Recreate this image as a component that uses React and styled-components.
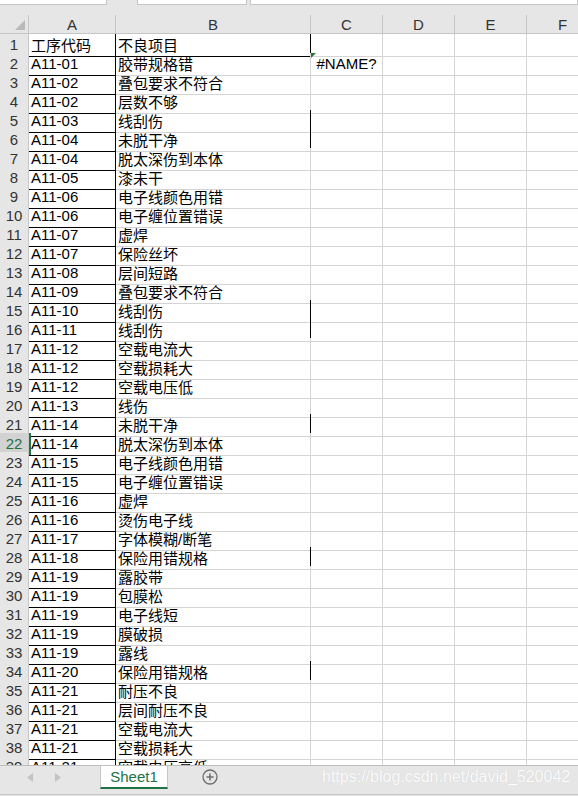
import React from 'react';
import styled, { createGlobalStyle } from 'styled-components';

const GlobalStyle = createGlobalStyle`
  * { box-sizing: border-box; }
  html, body { margin: 0; padding: 0; background: #e6e6e6; }
  body {
    font-family: 'Liberation Sans', 'Noto Sans CJK SC', sans-serif;
  }
`;

const COLS = '29px 87px 195px 72px 72px 72px 72px';
const GRID = '#d4d4d4';
const HEAD_LINE = '#c6c6c6';
const GREEN = '#217346';

const rows = [
  ['工序代码', '不良项目'],
  ['A11-01', '胶带规格错'],
  ['A11-02', '叠包要求不符合'],
  ['A11-02', '层数不够'],
  ['A11-03', '线刮伤'],
  ['A11-04', '未脱干净'],
  ['A11-04', '脱太深伤到本体'],
  ['A11-05', '漆未干'],
  ['A11-06', '电子线颜色用错'],
  ['A11-06', '电子缠位置错误'],
  ['A11-07', '虚焊'],
  ['A11-07', '保险丝坏'],
  ['A11-08', '层间短路'],
  ['A11-09', '叠包要求不符合'],
  ['A11-10', '线刮伤'],
  ['A11-11', '线刮伤'],
  ['A11-12', '空载电流大'],
  ['A11-12', '空载损耗大'],
  ['A11-12', '空载电压低'],
  ['A11-13', '线伤'],
  ['A11-14', '未脱干净'],
  ['A11-14', '脱太深伤到本体'],
  ['A11-15', '电子线颜色用错'],
  ['A11-15', '电子缠位置错误'],
  ['A11-16', '虚焊'],
  ['A11-16', '烫伤电子线'],
  ['A11-17', '字体模糊/断笔'],
  ['A11-18', '保险用错规格'],
  ['A11-19', '露胶带'],
  ['A11-19', '包膜松'],
  ['A11-19', '电子线短'],
  ['A11-19', '膜破损'],
  ['A11-19', '露线'],
  ['A11-20', '保险用错规格'],
  ['A11-21', '耐压不良'],
  ['A11-21', '层间耐压不良'],
  ['A11-21', '空载电流大'],
  ['A11-21', '空载损耗大'],
  ['A11-21', '空载电压高低'],
];

// rows whose B cell has a black right edge
const bRight = [1, 5, 6, 15, 16, 21, 28, 34];
const activeRow = 22;

const Page = styled.div`
  display: flex;
  flex-direction: column;
  height: 100vh;
  width: 578px;
  overflow: hidden;
  background: #e6e6e6;
`;

const FormulaStrip = styled.div`
  display: flex;
  height: 5px;
  flex-shrink: 0;
`;

const FormulaBox = styled.div`
  width: ${(p) => p.$w}px;
  margin-left: ${(p) => p.$ml || 0}px;
  flex-grow: ${(p) => (p.$grow ? 1 : 0)};
  background: #fff;
  border-bottom: 1px solid ${HEAD_LINE};
  border-right: 1px solid ${HEAD_LINE};
  border-left: ${(p) => (p.$ml ? `1px solid ${HEAD_LINE}` : 'none')};
`;

const Spacer = styled.div`
  height: 10px;
  flex-shrink: 0;
`;

const HeaderRow = styled.div`
  display: grid;
  grid-template-columns: ${COLS};
  height: 19px;
  flex-shrink: 0;
  border-bottom: 1px solid ${HEAD_LINE};
  background: #e6e6e6;
`;

const Corner = styled.div`
  display: flex;
  justify-content: flex-end;
  align-items: flex-end;
  padding: 0 3px 3px 0;
  border-right: 1px solid ${HEAD_LINE};
`;

const ColHead = styled.div`
  display: flex;
  align-items: center;
  justify-content: center;
  border-right: 1px solid ${HEAD_LINE};
  color: #333;
  font-size: 15px;
  line-height: 1;
`;

const Body = styled.div`
  flex: 1;
  overflow: hidden;
  background: #fff;
`;

const Row = styled.div`
  display: grid;
  grid-template-columns: ${COLS};
  height: 19px;
`;

const RowHead = styled.div`
  display: flex;
  align-items: center;
  justify-content: center;
  padding-bottom: 1px;
  background: ${(p) => (p.$active ? '#d2d2d2' : '#e6e6e6')};
  color: ${(p) => (p.$active ? GREEN : '#333')};
  border-right: 1px solid ${HEAD_LINE};
  border-bottom: 1px solid #d0d0d0;
  font-size: 15px;
`;

const Cell = styled.div`
  position: relative;
  display: flex;
  align-items: center;
  justify-content: ${(p) => (p.$center ? 'center' : 'flex-start')};
  padding: 0 0 1px ${(p) => (p.$center ? 0 : 2)}px;
  border-right: 1px solid ${(p) => (p.$br ? '#000' : GRID)};
  border-bottom: 1px solid ${(p) => (p.$bb ? '#000' : GRID)};
  box-shadow: ${(p) => (p.$selected ? `inset 2px 0 0 ${GREEN}` : 'none')};
  font-size: 15px;
  color: #000;
  white-space: nowrap;
`;

const ErrorMark = styled.span`
  position: absolute;
  left: 0;
  top: 0;
  width: 0;
  height: 0;
  border-top: 5px solid #1e7b34;
  border-right: 5px solid transparent;
`;

const TabBar = styled.div`
  position: relative;
  display: flex;
  height: 30px;
  flex-shrink: 0;
  background: #e6e6e6;
  border-top: 1px solid #bdbdbd;
  border-bottom: 1px solid #c6c6c6;
  margin-bottom: 1px;
`;

const NavArea = styled.div`
  display: flex;
  align-items: center;
  gap: 22px;
  width: 100px;
  padding-left: 27px;
  margin-bottom: 6px;
`;

const SheetTab = styled.div`
  display: flex;
  align-items: center;
  justify-content: center;
  width: 68px;
  height: 23px;
  background: #fff;
  border-left: 1px solid #c6c6c6;
  border-right: 1px solid #c6c6c6;
  border-bottom: 2px solid ${GREEN};
  color: ${GREEN};
  font-size: 15px;
`;

const AddButton = styled.div`
  display: flex;
  align-items: center;
  margin-left: 34px;
  margin-bottom: 6px;
`;

const Watermark = styled.span`
  position: absolute;
  left: 322px;
  top: 2px;
  font-family: 'Liberation Sans', Arial, sans-serif;
  font-size: 16px;
  color: rgba(255, 255, 255, 0.95);
  text-shadow: 0 0 1px rgba(0, 0, 0, 0.12);
  white-space: nowrap;
`;

function Arrow({ left }) {
  return (
    <svg width="6" height="9" viewBox="0 0 6 9">
      <polygon points={left ? '6,0 0,4.5 6,9' : '0,0 6,4.5 0,9'} fill="#c4c4c4" />
    </svg>
  );
}

export default function App() {
  const letters = ['A', 'B', 'C', 'D', 'E', 'F'];
  return (
    <Page>
      <GlobalStyle />
      <FormulaStrip>
        <FormulaBox $w={107} />
        <FormulaBox $w={110} $ml={30} />
        <FormulaBox $ml={3} $grow />
      </FormulaStrip>
      <Spacer />
      <HeaderRow>
        <Corner>
          <svg width="10" height="10" viewBox="0 0 10 10">
            <polygon points="10,0 10,10 0,10" fill="#b9b9b9" />
          </svg>
        </Corner>
        {letters.map((l) => (
          <ColHead key={l}>{l}</ColHead>
        ))}
      </HeaderRow>
      <Body>
        {rows.map(([a, b], i) => {
          const n = i + 1;
          return (
            <Row key={n}>
              <RowHead $active={n === activeRow}>{n}</RowHead>
              <Cell $bb $br $selected={n === activeRow}>{a}</Cell>
              <Cell $bb={n === 1} $br={bRight.includes(n)}>{b}</Cell>
              <Cell $center>
                {n === 2 && (
                  <>
                    <ErrorMark />
                    #NAME?
                  </>
                )}
              </Cell>
              <Cell />
              <Cell />
              <Cell />
            </Row>
          );
        })}
      </Body>
      <TabBar>
        <NavArea>
          <Arrow left />
          <Arrow />
        </NavArea>
        <SheetTab>Sheet1</SheetTab>
        <AddButton>
          <svg width="16" height="16" viewBox="0 0 16 16">
            <circle cx="8" cy="8" r="7" fill="none" stroke="#6e6e6e" strokeWidth="1.3" />
            <path d="M8 4.5v7M4.5 8h7" stroke="#6e6e6e" strokeWidth="1.5" />
          </svg>
        </AddButton>
        <Watermark>https://blog.csdn.net/david_520042</Watermark>
      </TabBar>
    </Page>
  );
}
